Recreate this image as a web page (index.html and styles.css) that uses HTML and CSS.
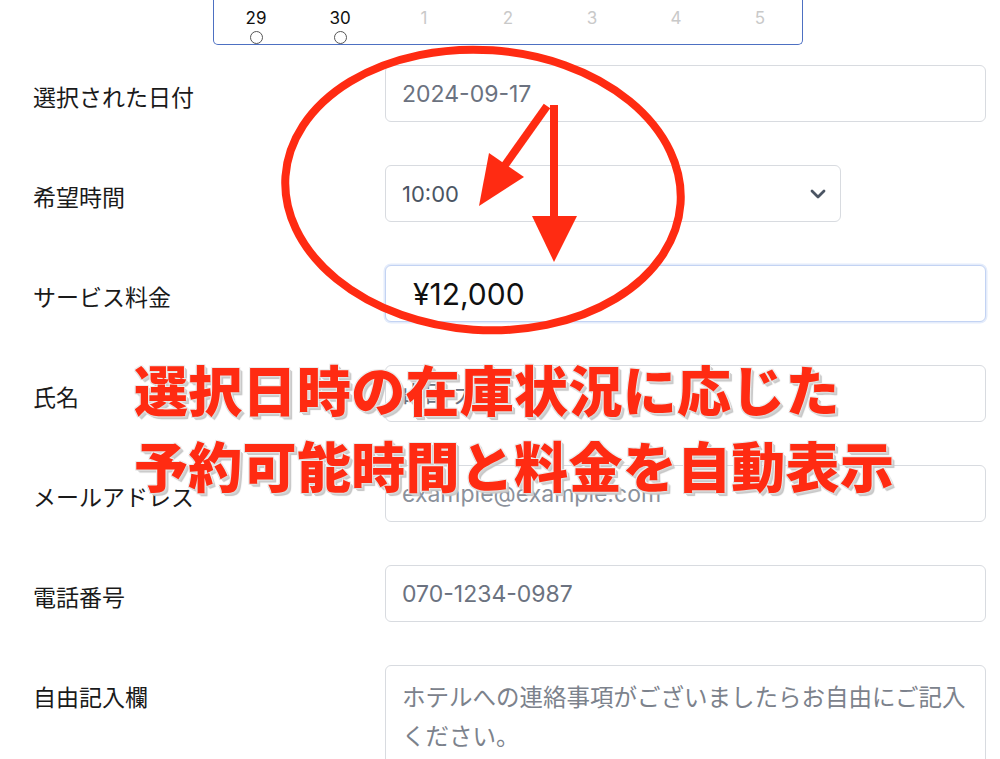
FILE: index.html
```html
<!DOCTYPE html>
<html lang="ja">
<head>
<meta charset="utf-8">
<title>予約フォーム</title>
<link rel="stylesheet" href="styles.css">
</head>
<body>
<div class="page">
  <div class="calendar">
    <div class="day"><span class="num">29</span><span class="mark"></span></div>
    <div class="day"><span class="num">30</span><span class="mark"></span></div>
    <div class="day off"><span class="num">1</span></div>
    <div class="day off"><span class="num">2</span></div>
    <div class="day off"><span class="num">3</span></div>
    <div class="day off"><span class="num">4</span></div>
    <div class="day off"><span class="num">5</span></div>
  </div>

  <form class="form">
    <div class="row">
      <label class="label">選択された日付</label>
      <input class="field muted" type="text" value="2024-09-17" readonly>
    </div>
    <div class="row">
      <label class="label">希望時間</label>
      <div class="field select">
        <span>10:00</span>
        <svg class="chev" width="16" height="10" viewBox="0 0 16 10"><path d="M2 2 L8 8 L14 2" fill="none" stroke="#4b5563" stroke-width="2.8" stroke-linecap="round" stroke-linejoin="round"/></svg>
      </div>
    </div>
    <div class="row">
      <label class="label">サービス料金</label>
      <input class="field price" type="text" value="¥12,000" readonly>
    </div>
    <div class="row">
      <label class="label">氏名</label>
      <input class="field" type="text" placeholder="山田 太郎">
    </div>
    <div class="row">
      <label class="label">メールアドレス</label>
      <input class="field light" type="text" placeholder="example@example.com">
    </div>
    <div class="row">
      <label class="label">電話番号</label>
      <input class="field" type="text" placeholder="070-1234-0987">
    </div>
    <div class="row top">
      <label class="label note-label">自由記入欄</label>
      <textarea class="field area" placeholder="ホテルへの連絡事項がございましたらお自由にご記入ください。"></textarea>
    </div>
  </form>

  <svg class="marks" width="1000" height="759" viewBox="0 0 1000 759">
    <ellipse cx="483" cy="190" rx="198" ry="140" transform="rotate(4 483 190)" fill="none" stroke="#ff2b12" stroke-width="8"/>
    <line x1="547" y1="106" x2="503" y2="168" stroke="#ff2b12" stroke-width="8"/>
    <polygon points="479,206 489,153 524,177" fill="#ff2b12"/>
    <rect x="550" y="105" width="8" height="115" fill="#ff2b12"/>
    <polygon points="532,216 577,216 554,262" fill="#ff2b12"/>
  </svg>

  <div class="caption">
    <p>選択日時の在庫状況に応じた</p>
    <p>予約可能時間と料金を自動表示</p>
  </div>
</div>
</body>
</html>
```

FILE: styles.css
```css
* { box-sizing: border-box; }

html, body {
  margin: 0;
  padding: 0;
  background: #ffffff;
}

body {
  font-family: "Noto Sans CJK JP", "Noto Sans", sans-serif;
  color: #1a1a1a;
  width: 1000px;
  height: 759px;
  overflow: hidden;
}

.page {
  position: relative;
  width: 1000px;
  height: 759px;
}

/* calendar strip */
.calendar {
  margin-left: 213px;
  width: 590px;
  height: 45px;
  border: 1.5px solid #4d70c2;
  border-top: none;
  border-radius: 0 0 5px 5px;
  display: grid;
  grid-template-columns: repeat(7, 1fr);
}

.day {
  display: flex;
  flex-direction: column;
  align-items: center;
  padding-top: 8px;
}

.num {
  font-family: "Inter", "Noto Sans", sans-serif;
  font-size: 17px;
  line-height: 20px;
  color: #111;
}

.day.off .num { color: #c9c9c9; }

.mark {
  width: 13px;
  height: 13px;
  margin-top: 3px;
  border: 1.2px solid #555;
  border-radius: 50%;
}

/* form */
.form {
  margin-top: 20px;
  padding-left: 33px;
  display: flex;
  flex-direction: column;
  gap: 43px;
}

.row {
  display: grid;
  grid-template-columns: 352px 601px;
  align-items: center;
}

.row.top { align-items: start; }

.label {
  font-size: 23px;
  line-height: 34px;
  color: #1a1a1a;
  padding-top: 4px;
}

.note-label { padding-top: 14px; }

.field {
  height: 57px;
  width: 601px;
  border: 1px solid #d8dbe0;
  border-radius: 6px;
  background: #fff;
  padding: 0 16px;
  font-family: "Inter", "Noto Sans CJK JP", sans-serif;
  font-size: 23px;
  font-weight: 400;
  color: #4b5563;
  outline: none;
}

.field::placeholder { color: #6b7280; }

.field.light::placeholder { color: #8b919b; }

.field.muted { color: #6b7280; }

.select {
  width: 456px;
  display: flex;
  align-items: center;
  justify-content: space-between;
  padding-right: 14px;
  font-size: 22px;
}

.chev { display: block; }

.price {
  border: 1.5px solid #c3d3f3;
  box-shadow: 0 0 0 1.5px #e4ecfb;
  color: #111;
  font-size: 30px;
  padding-left: 27px;
}

.area {
  height: 130px;
  resize: none;
  padding: 11px 16px;
  font-family: "Noto Sans CJK JP", sans-serif;
  font-size: 23.5px;
  line-height: 39px;
}

.area::placeholder { color: #7c828c; }

/* annotation overlay */
.marks {
  position: absolute;
  left: 0;
  top: 0;
  pointer-events: none;
}

.caption {
  position: absolute;
  left: 134px;
  top: 351px;
  pointer-events: none;
}

.caption p {
  margin: 0;
  font-family: "Noto Sans CJK JP", sans-serif;
  font-weight: 900;
  font-size: 54px;
  line-height: 76px;
  letter-spacing: 0.3px;
  color: #ff2b12;
  white-space: nowrap;
  text-shadow:
    -1px -1px 0 #ececec,
    1px -1px 0 #ececec,
    -1px 1px 0 #e0e0e0,
    1px 1px 0 #d6d6d6,
    2px 2px 0 #cfcfcf,
    3px 3px 1px #c4c4c4;
}
```
